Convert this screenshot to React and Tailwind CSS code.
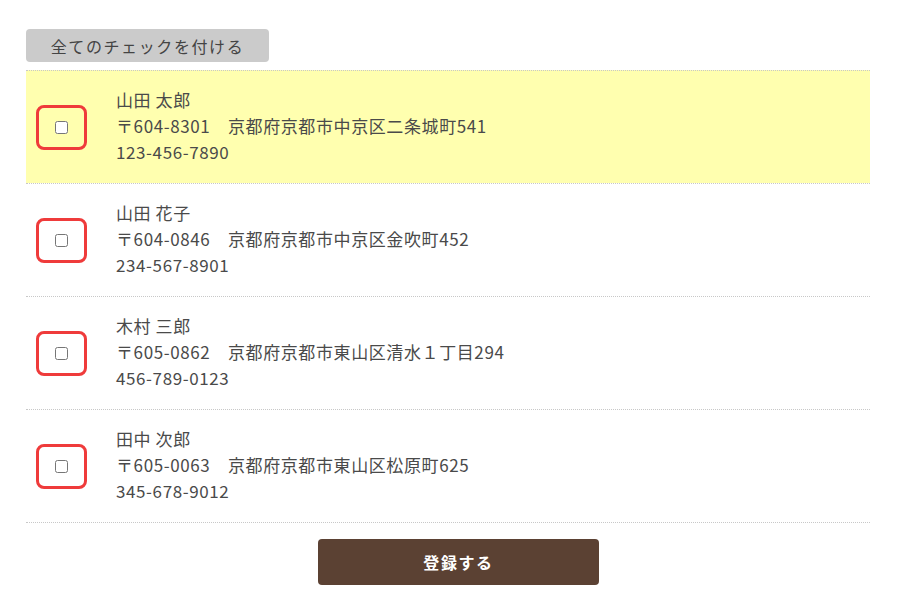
import React, { useState } from "react";

const PEOPLE = [
  { id: 1, name: "山田 太郎", zip: "〒604-8301", address: "京都府京都市中京区二条城町541", tel: "123-456-7890" },
  { id: 2, name: "山田 花子", zip: "〒604-0846", address: "京都府京都市中京区金吹町452", tel: "234-567-8901" },
  { id: 3, name: "木村 三郎", zip: "〒605-0862", address: "京都府京都市東山区清水１丁目294", tel: "456-789-0123" },
  { id: 4, name: "田中 次郎", zip: "〒605-0063", address: "京都府京都市東山区松原町625", tel: "345-678-9012" },
];

const App = () => {
  const [checked, setChecked] = useState({});
  const [highlight] = useState(1);

  const toggle = (id) => setChecked((c) => ({ ...c, [id]: !c[id] }));
  const checkAll = () =>
    setChecked(Object.fromEntries(PEOPLE.map((p) => [p.id, true])));

  return (
    <div
      className="min-h-[614px] bg-white text-[#4a4a4a]"
      style={{ fontFamily: '"Noto Sans CJK JP", "Noto Sans", sans-serif' }}
    >
      <div className="ml-[26px] w-[844px] pt-[29px]">
        <button
          onClick={checkAll}
          className="h-[33px] w-[243px] rounded-[4px] bg-[#cbcbcb] text-[16px] tracking-[0.1em] text-[#444]"
        >
          全てのチェックを付ける
        </button>

        <ul className="mt-[8px] border-b border-dotted border-[#c8c8c8]">
          {PEOPLE.map((p) => (
            <li
              key={p.id}
              className={`flex h-[113px] items-center border-t border-dotted border-[#c8c8c8] ${
                p.id === highlight ? "bg-[#ffffaf]" : "bg-white"
              }`}
            >
              <label className="ml-[10px] flex h-[45px] w-[51px] cursor-pointer items-center justify-center rounded-[8px] border-[3px] border-[#ef3b3b]">
                <input
                  type="checkbox"
                  checked={!!checked[p.id]}
                  onChange={() => toggle(p.id)}
                  className="m-0 h-[13px] w-[13px]"
                />
              </label>
              <div className="ml-[29px] -mt-[2px] text-[17px] leading-[26px] tracking-[0.6px]">
                <p>{p.name}</p>
                <p>
                  {p.zip}　{p.address}
                </p>
                <p>{p.tel}</p>
              </div>
            </li>
          ))}
        </ul>

        <button className="ml-[292px] mt-[16px] h-[46px] w-[281px] rounded-[4px] bg-[#5b4133] text-[16px] font-bold tracking-[0.1em] text-white">
          登録する
        </button>
      </div>
    </div>
  );
};

export default App;
